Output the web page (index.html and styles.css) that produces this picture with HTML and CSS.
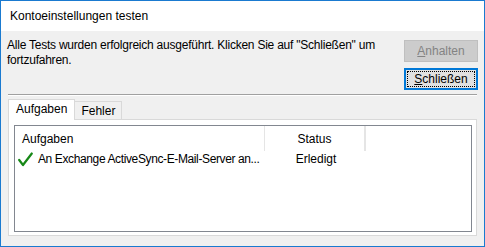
FILE: index.html
```html
<!DOCTYPE html>
<html lang="de">
<head>
    <meta charset="UTF-8">
    <title>Kontoeinstellungen testen</title>
    <link rel="stylesheet" href="styles.css">
</head>
<body>
    <div class="dialog">
        <div class="titlebar">Kontoeinstellungen testen</div>

        <div class="content">
            <div class="top">
                <p class="message">Alle Tests wurden erfolgreich ausgeführt. Klicken Sie auf "Schließen" um<br>fortzufahren.</p>
                <div class="actions">
                    <button class="btn" disabled><u>A</u>nhalten</button>
                    <button class="btn default"><span class="focus-rect"><u>S</u>chließen</span></button>
                </div>
            </div>

            <div class="separator"></div>

            <!-- Reiter -->
            <div class="tabs">
                <div class="tab active">Aufgaben</div>
                <div class="tab">Fehler</div>
            </div>

            <div class="tab-panel">
                <div class="listview">
                    <div class="lv-header">
                        <div class="col col-task">Aufgaben</div>
                        <div class="col col-status">Status</div>
                        <div class="col col-rest"></div>
                    </div>
                    <div class="lv-row">
                        <div class="col col-task">
                            <svg class="check" width="15" height="15" viewBox="0 0 15 15">
                                <polyline points="1.2,8 5,13 13.8,1.5" fill="none" stroke="#178817" stroke-width="2.2" stroke-linecap="round" stroke-linejoin="round"/>
                            </svg>
                            <span class="task-name">An Exchange ActiveSync-E-Mail-Server an...</span>
                        </div>
                        <div class="col col-status">Erledigt</div>
                    </div>
                </div>
            </div>
        </div>
    </div>
</body>
</html>
```

FILE: styles.css
```css
body {
    margin: 0;
    font-family: "Liberation Sans", Arial, sans-serif;
    font-size: 12px;
    color: #000;
    background: #f0f0f0;
}

.dialog {
    width: 485px;
    height: 247px;
    box-sizing: border-box;
    border: 1px solid #1a7ad0;
    background: #f0f0f0;
    display: flex;
    flex-direction: column;
}

/* Titelleiste */
.titlebar {
    height: 30px;
    background: #fff;
    padding-left: 9px;
    line-height: 30px;
    font-size: 12px;
}

.content {
    padding: 7px 6px 0 6px;
}

.top {
    display: flex;
    justify-content: space-between;
    align-items: flex-start;
}

.message {
    margin: 0;
    line-height: 15px;
    letter-spacing: -0.23px;
}

.actions {
    display: flex;
    flex-direction: column;
    gap: 6px;
    margin-top: 2px;
}

.btn {
    width: 74px;
    height: 22px;
    box-sizing: border-box;
    font-family: inherit;
    font-size: 12px;
    padding: 0;
    background: #e1e1e1;
    border: 1px solid #adadad;
    color: #000;
}

.btn[disabled] {
    background: #cccccc;
    border-color: #bfbfbf;
    color: #838383;
}

.btn.default {
    border: 2px solid #0078d7;
    padding: 1px;
}

.focus-rect {
    display: block;
    height: 100%;
    box-sizing: border-box;
    border: 1px dotted #000;
    line-height: 14px;
}

.separator {
    margin: 4px 1px 0 1px;
    border-top: 1px solid #a0a0a0;
    border-bottom: 1px solid #fff;
}

/* Reiter */
.tabs {
    display: flex;
    align-items: flex-end;
    height: 20px;
    margin-top: 3px;
    padding-left: 1px;
}

.tab {
    height: 18px;
    box-sizing: border-box;
    padding: 0 6px;
    border: 1px solid #d9d9d9;
    border-bottom: none;
    border-left: none;
    background: #f0f0f0;
    line-height: 18px;
}

.tab.active {
    position: relative;
    z-index: 1;
    height: 21px;
    margin-bottom: -1px;
    padding: 0 7px;
    border-left: 1px solid #d9d9d9;
    background: #fff;
    line-height: 18px;
}

.tab-panel {
    margin: 0 1px 0 1px;
    height: 117px;
    box-sizing: border-box;
    border: 1px solid #d9d9d9;
    background: #fff;
    padding: 5px 4px 3px 5px;
}

/* Liste */
.listview {
    height: 100%;
    box-sizing: border-box;
    border: 1px solid #828790;
    background: #fff;
}

.lv-header {
    display: flex;
    height: 25px;
}

.lv-header .col {
    padding-top: 6px;
    line-height: 15px;
    border-right: 1px solid #e5e5e5;
    box-sizing: border-box;
}

.col-task {
    width: 250px;
    padding-left: 7px;
    box-sizing: border-box;
}

.col-status {
    width: 100px;
    text-align: center;
}

.col-rest {
    width: 1px;
}

.lv-row {
    display: flex;
    height: 17px;
    line-height: 17px;
}

.lv-row .col-task {
    display: flex;
    align-items: center;
    gap: 5px;
    padding-left: 3px;
    white-space: nowrap;
}

.task-name {
    letter-spacing: -0.38px;
}

.lv-row .col-status {
    padding-left: 1px;
}

.check {
    flex: none;
}
```
